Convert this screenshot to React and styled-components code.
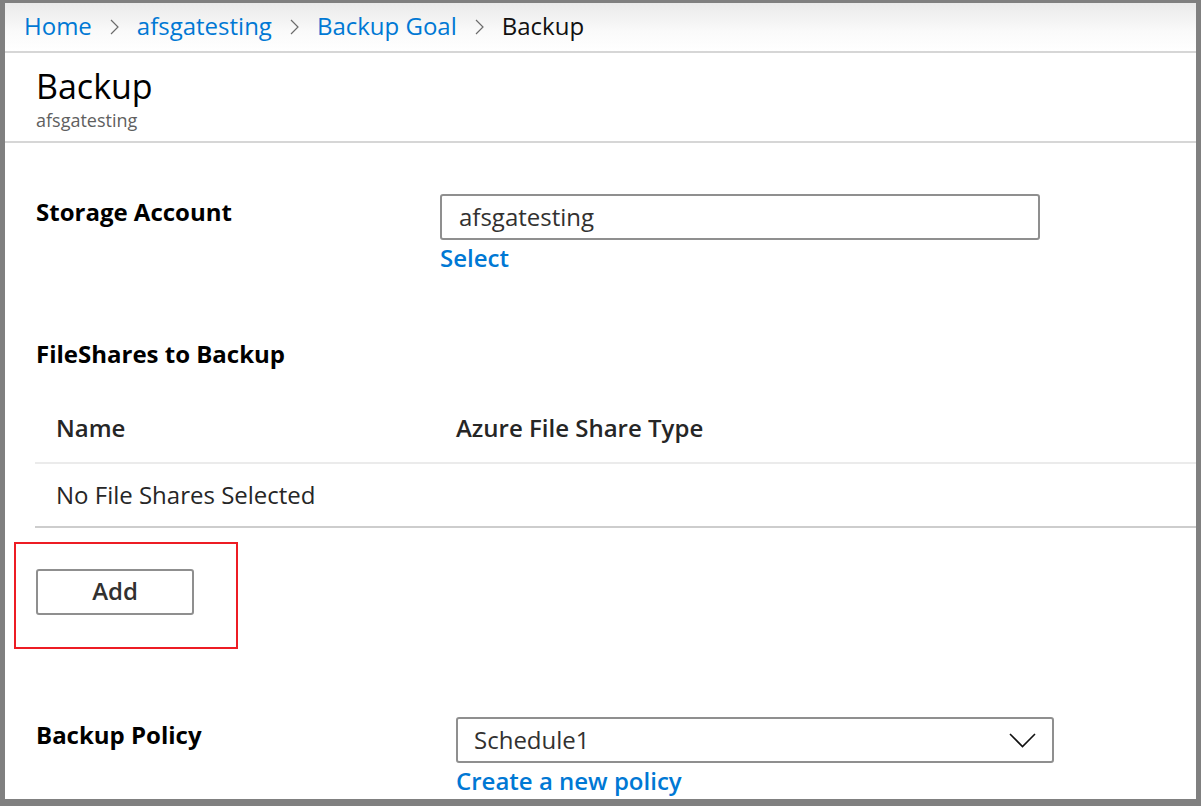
import React from "react";
import styled, { createGlobalStyle } from "styled-components";

const GlobalStyle = createGlobalStyle`
  html, body {
    margin: 0;
    padding: 0;
    background: #ffffff;
  }
  body {
    font-family: "Open Sans", "Noto Sans", Arial, sans-serif;
    color: #262626;
  }
`;

const crumbs = ["Home", "afsgatesting", "Backup Goal"];

const Chevron = () => (
  <svg width="9" height="16" viewBox="0 0 9 16" fill="none">
    <path d="M1 1 L8 8 L1 15" stroke="#6b6b6b" strokeWidth="1.2" />
  </svg>
);

const DropChevron = () => (
  <svg width="27" height="15" viewBox="0 0 27 15" fill="none">
    <path d="M1 1 L13.5 13.5 L26 1" stroke="#111" strokeWidth="1.6" />
  </svg>
);

export default function App() {
  return (
    <>
      <GlobalStyle />
      <Frame>
        <Breadcrumb>
          {crumbs.map((c) => (
            <React.Fragment key={c}>
              <CrumbLink>{c}</CrumbLink>
              <Chevron />
            </React.Fragment>
          ))}
          <CrumbCurrent>Backup</CrumbCurrent>
        </Breadcrumb>

        <Header>
          <Title>Backup</Title>
          <Subtitle>afsgatesting</Subtitle>
        </Header>

        <Content>
          <FieldRow labelWidth={404}>
            <Label>Storage Account</Label>
            <div>
              <TextBox>afsgatesting</TextBox>
              <Link>Select</Link>
            </div>
          </FieldRow>

          <SectionTitle>FileShares to Backup</SectionTitle>

          <Table>
            <HeadRow>
              <HeadCell>Name</HeadCell>
              <HeadCell>Azure File Share Type</HeadCell>
            </HeadRow>
            <BodyRow>
              <BodyCell>No File Shares Selected</BodyCell>
            </BodyRow>
          </Table>

          <Highlight>
            <Button type="button">Add</Button>
          </Highlight>

          <FieldRow labelWidth={420} top={68}>
            <Label>Backup Policy</Label>
            <div>
              <Dropdown>
                <span>Schedule1</span>
                <DropChevron />
              </Dropdown>
              <Link>Create a new policy</Link>
            </div>
          </FieldRow>
        </Content>
      </Frame>
    </>
  );
}

const Frame = styled.div`
  width: 1201px;
  height: 806px;
  box-sizing: border-box;
  border-style: solid;
  border-color: #808080;
  border-width: 3px 5px 7px 5px;
  overflow: hidden;
  background: #fff;
`;

const Breadcrumb = styled.div`
  height: 50px;
  box-sizing: border-box;
  padding: 7px 0 0 19px;
  display: flex;
  align-items: flex-start;
  gap: 18px;
  background: linear-gradient(to bottom, #eaeaea 0%, #fafafa 60%, #ffffff 100%);
  border-bottom: 2px solid #d6d6d6;

  svg {
    margin-top: 9px;
  }
`;

const CrumbLink = styled.span`
  font-size: 24px;
  line-height: 32px;
  color: #0078d4;
`;

const CrumbCurrent = styled.span`
  font-size: 24px;
  line-height: 32px;
  color: #111;
`;

const Header = styled.div`
  padding: 13px 0 10px 31px;
  border-bottom: 2px solid #d6d6d6;
`;

const Title = styled.div`
  font-size: 34px;
  line-height: 40px;
  color: #000;
  margin-bottom: 3px;
`;

const Subtitle = styled.div`
  font-size: 18px;
  line-height: 22px;
  color: #5f5f5f;
`;

const Content = styled.div`
  padding: 51px 0 0 31px;
`;

const FieldRow = styled.div`
  display: grid;
  grid-template-columns: ${(p) => p.labelWidth}px 598px;
  align-items: start;
  margin-top: ${(p) => p.top || 0}px;
`;

const Label = styled.div`
  font-size: 24px;
  line-height: 30px;
  font-weight: 700;
  color: #000;
  margin-top: 3px;
`;

const TextBox = styled.div`
  width: 600px;
  height: 46px;
  box-sizing: border-box;
  border: 2px solid #8f8f8f;
  border-radius: 3px;
  padding: 0 17px;
  font-size: 24px;
  line-height: 42px;
  color: #323130;
`;

const Link = styled.div`
  font-size: 24px;
  line-height: 30px;
  font-weight: 600;
  color: #0078d4;
  margin-top: 3px;
`;

const SectionTitle = styled.div`
  font-size: 24px;
  line-height: 30px;
  font-weight: 700;
  color: #000;
  margin-top: 66px;
`;

const Table = styled.div`
  margin: 42px 0 0 -1px;
`;

const HeadRow = styled.div`
  display: grid;
  grid-template-columns: 400px 1fr;
  padding: 0 0 18px 21px;
  border-bottom: 2px solid #ebebeb;
`;

const HeadCell = styled.div`
  font-size: 24px;
  line-height: 33px;
  font-weight: 600;
  color: #262626;
`;

const BodyRow = styled.div`
  padding: 14px 0 15px 21px;
  border-bottom: 2px solid #cdcdcd;
`;

const BodyCell = styled.div`
  font-size: 24px;
  line-height: 33px;
  color: #262626;
`;

const Highlight = styled.div`
  width: 224px;
  height: 107px;
  box-sizing: border-box;
  margin: 14px 0 0 -22px;
  padding: 25px 0 0 20px;
  border: 2px solid #ed1c24;
`;

const Button = styled.button`
  width: 158px;
  height: 46px;
  box-sizing: border-box;
  border: 2px solid #8f8f8f;
  border-radius: 3px;
  background: #fff;
  font-family: "Open Sans", "Noto Sans", Arial, sans-serif;
  font-size: 24px;
  font-weight: 600;
  color: #323130;
  padding: 0 0 4px 0;
`;

const Dropdown = styled.div`
  width: 598px;
  height: 46px;
  box-sizing: border-box;
  border: 2px solid #8f8f8f;
  border-radius: 3px;
  padding: 0 16px 0 16px;
  display: flex;
  align-items: center;
  justify-content: space-between;
  font-size: 24px;
  line-height: 42px;
  color: #323130;
`;
